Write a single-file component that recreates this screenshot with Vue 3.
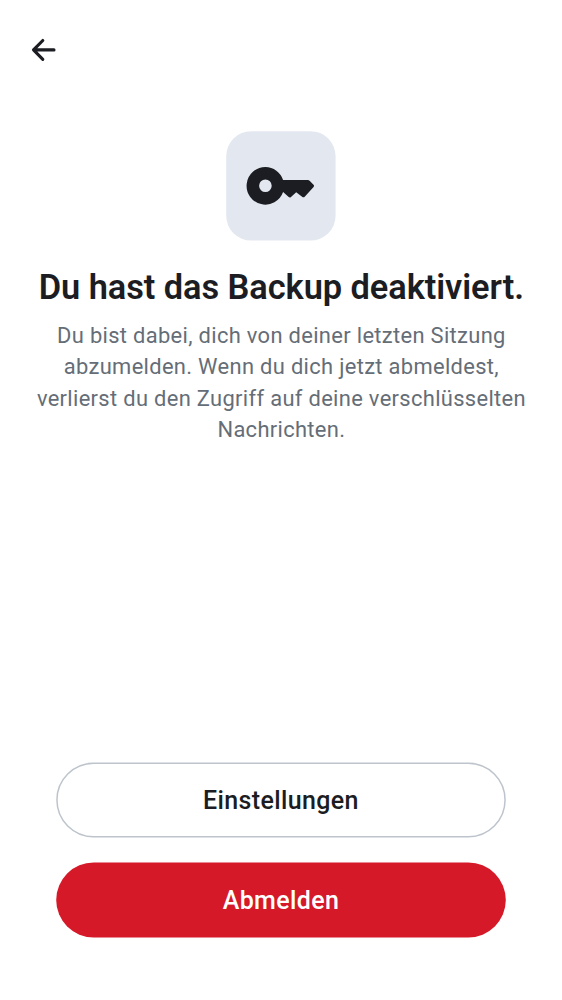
<script setup>
const body = [
  'Du bist dabei, dich von deiner letzten Sitzung',
  'abzumelden. Wenn du dich jetzt abmeldest,',
  'verlierst du den Zugriff auf deine verschlüsselten',
  'Nachrichten.',
]
</script>

<template>
  <main class="screen">
    <header class="bar">
      <button class="back" aria-label="Zurück">
        <svg width="50" height="50" viewBox="0 0 50 50">
          <path d="M36 24.900H16.500M24.800 15.500L15.500 24.900L24.800 34.300" fill="none" stroke="#1b1d22" stroke-width="3.100" stroke-linecap="round" stroke-linejoin="round" />
        </svg>
      </button>
    </header>
    <section class="content">
      <div class="tile">
        <svg width="110" height="110" viewBox="0 0 110 110">
          <rect x=".2" y=".2" width="109.400" height="109.400" rx="25" fill="#e3e8f0" />
          <path fill-rule="evenodd" fill="#1b1d22" d="M39.400 36a18.800 18.800 0 1 0 17.700 25.100l5.600 4.900q1.200.9 2.300-.1l5.200-4.600 6.200 4.700q1.200.8 2.300-.2l8.900-9.900q.9-1.100-.1-2.200l-3.900-4q-.7-.7-1.700-.7H57.100A18.800 18.800 0 0 0 39.400 36ZM39.400 48.500a6.300 6.300 0 1 1 0 12.600a6.300 6.300 0 0 1 0-12.600Z" />
        </svg>
      </div>
      <h1>Du hast das Backup deaktiviert.</h1>
      <p><span v-for="line in body" :key="line">{{ line }}</span></p>
    </section>
    <footer class="actions">
      <button class="outline">
        <svg class="pill" width="450" height="76" viewBox="0 0 450 76">
          <rect x=".95" y="1.300" width="448.100" height="73.500" rx="36.750" fill="none" stroke="#bdc4cc" stroke-width="1.500" />
        </svg>
        <span>Einstellungen</span>
      </button>
      <button class="danger">
        <svg class="pill" width="450" height="76" viewBox="0 0 450 76">
          <rect x=".2" y=".5" width="449.600" height="75" rx="37.500" fill="#d51928" />
        </svg>
        <span>Abmelden</span>
      </button>
    </footer>
  </main>
</template>

<style>
body { background: #fff; }
</style>

<style scoped>
.screen {
  box-sizing: border-box;
  width: 562px;
  height: 1000px;
  display: flex;
  flex-direction: column;
  font-family: Roboto, "Liberation Sans", sans-serif;
  background: #fff;
  color: #1b1d22;
}
svg { display: block; }
button { font: inherit; color: inherit; background: none; border: 0; padding: 0; }
.bar { height: 100px; padding: 25px 0 0 18px; box-sizing: border-box; }
.back { display: block; width: 50px; height: 50px; }
.content { flex: 1; display: flex; flex-direction: column; align-items: center; padding-top: 31px; }
.tile { width: 110px; height: 110px; }
h1 { margin: 25px 0 0; padding-left: .6px; font-size: 34.4px; line-height: 42px; font-weight: 600; letter-spacing: -.07px; white-space: nowrap; }
p { margin: 12.250px 0 0; padding-left: .8px; font-size: 21.9px; line-height: 31.2px; letter-spacing: .33px; color: #656d77; text-align: center; white-space: nowrap; }
p span { display: block; }
.actions { display: flex; flex-direction: column; gap: 24px; padding: 0 56px 62px; }
.actions button { display: grid; height: 76px; font-size: 25px; font-weight: 500; line-height: 30px; letter-spacing: .37px; }
.actions button > * { grid-area: 1 / 1; }
.actions button > span { place-self: center; padding-top: 1px; }
.actions .danger { color: #fff; }
</style>
